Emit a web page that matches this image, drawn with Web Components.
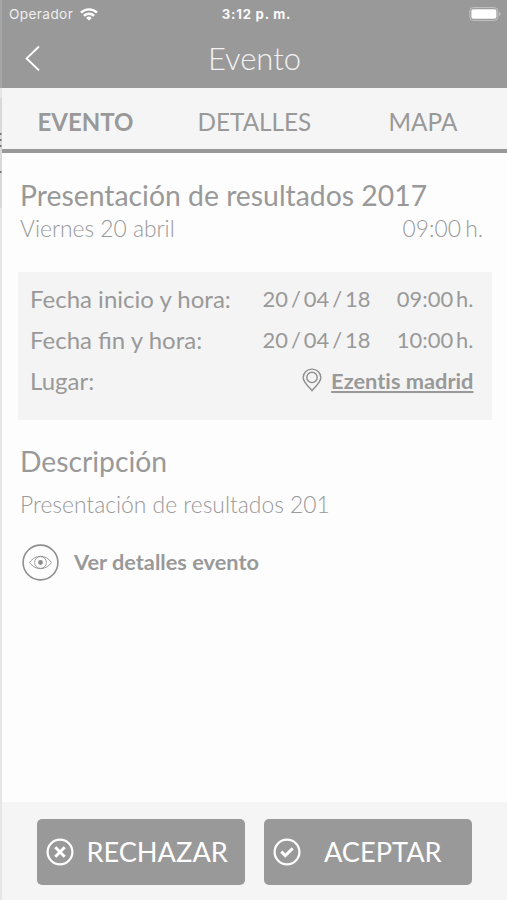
<!DOCTYPE html>
<html lang="es">
<head>
<meta charset="utf-8">
<title>Evento</title>
<style>
html,body{margin:0;height:100%}
body{background:#fdfdfd;font-family:Lato,"Open Sans",sans-serif;color:#999}
</style>
</head>
<body>
<event-app></event-app>
<script>
const define=(name,html)=>customElements.define(name,class extends HTMLElement{
  constructor(){super();this.attachShadow({mode:'open'}).innerHTML=html;}
});

define('status-bar',`<style>
:host{display:grid;grid-template-columns:1fr auto 1fr;align-items:center;height:28px;padding:0 6px 0 9px;color:#fafafa;font:400 13.6px/28px Inter,sans-serif;box-sizing:border-box}
.left{display:flex;align-items:center;gap:7px;letter-spacing:.4px;color:#efefef}
.time{font-weight:700;font-size:13.2px;letter-spacing:.75px;padding-left:3px}
.right{display:flex;justify-content:flex-end}
svg{display:block}
</style>
<div class="left"><span>Operador</span><svg width="18" height="13" viewBox="0 0 18 13" fill="none" stroke="#fff" stroke-width="2.4"><path d="M1 4.7a11.4 11.4 0 0 1 16 0"/><path d="M3.9 7.9a7.2 7.2 0 0 1 10.2 0"/><path d="M9 12.6 6.2 9.9a4 4 0 0 1 5.6 0z" fill="#fff" stroke="none"/></svg></div>
<div class="time">3:12 p. m.</div>
<div class="right"><svg width="32" height="14" viewBox="0 0 32 14"><rect x=".9" y=".6" width="28" height="12.8" rx="3.5" fill="none" stroke="#c4c4c4"/><rect x="2.4" y="2.2" width="25" height="9.6" rx="1.8" fill="#fff"/><path d="M30.2 5v4q1.5-.6 1.5-2t-1.5-2z" fill="#c4c4c4"/></svg></div>`);

define('title-bar',`<style>
:host{display:grid;grid-template-columns:60px 1fr 60px;align-items:center;height:60px;color:#f2f2f2}
svg{display:block;margin-left:24px}
h1{margin:0;text-align:center;font-weight:300;font-size:31px;line-height:60px;padding-left:2px}
</style>
<svg width="17" height="27" viewBox="0 0 17 27" fill="none" stroke="#fff" stroke-width="1.9"><path d="M15 1.5 2.6 13.4 15 25.4"/></svg>
<h1><slot></slot></h1>`);

define('tab-bar',`<style>
:host{display:grid;grid-template-columns:160px 191px auto;height:65px;box-sizing:border-box;background:#f5f5f5;border-bottom:4px solid #999;padding-left:37.5px}
</style><slot></slot>`);

define('tab-item',`<style>
:host{display:block;font-size:24.3px;line-height:67px}
:host([active]){font-weight:700;font-size:24px}
</style><slot></slot>`);

define('detail-row',`<style>
:host{display:grid;grid-template-columns:1fr auto auto;align-items:center;height:41px;line-height:41px;font-size:24px}
::slotted([slot=date]),::slotted([slot=time]){font-size:21.9px;word-spacing:-2.6px}
::slotted([slot=time]){width:103px;text-align:right}
</style><span><slot></slot></span><slot name="date"></slot><slot name="time"></slot><slot name="place"></slot>`);

define('place-link',`<style>
:host{display:flex;align-items:center;gap:9px;font-weight:700;font-size:21.8px;font-variant-ligatures:none}
svg{display:block;margin-bottom:1px}
span{text-decoration:underline;text-decoration-thickness:1.6px;text-underline-offset:2px;text-decoration-skip-ink:none}
</style><svg width="20" height="24" viewBox="0 0 20 24" fill="none" stroke="#8e8e8e" stroke-width="1.4"><path d="M10 22.7C7.5 18.9 1.2 14.7 1.2 9.4a8.8 8.3 0 0 1 17.6 0c0 5.3-6.3 9.5-8.8 13.3z"/><circle cx="10" cy="9.4" r="5.2"/></svg><span><slot></slot></span>`);

define('details-button',`<style>
:host{display:flex;align-items:center;gap:15px;font-weight:700;font-size:21.75px;line-height:33px}
svg{display:block}
</style><svg width="37" height="37" viewBox="0 0 37 37" fill="none" stroke="#8f8f8f"><circle cx="18.5" cy="18.5" r="17.4" stroke-width="1.6"/><path d="M7.5 18.5C13.5 10.3 23.5 10.3 29.5 18.5C23.5 26.7 13.5 26.7 7.5 18.5z" stroke-width=".9"/><circle cx="18.5" cy="18.5" r="5.9" stroke-width=".8"/><circle cx="18.5" cy="18.5" r="2.4" fill="#8f8f8f" stroke="none"/></svg><span><slot></slot></span>`);

const icons={reject:'M9.3 9.3l9.4 9.4M18.7 9.3l-9.4 9.4',accept:'M8.3 13.6l4 4 7.4-7.2'};
customElements.define('action-button',class extends HTMLElement{
  connectedCallback(){
    this.attachShadow({mode:'open'}).innerHTML=`<style>
:host{display:flex;align-items:center;box-sizing:border-box;width:208px;height:66px;padding-left:9px;border-radius:5px;background:#999;color:#fff;font-size:27.2px}
svg{display:block;flex:none}
.label{flex:1;padding-left:var(--label-gap);line-height:66px}
</style><svg width="28" height="28" viewBox="0 0 28 28" fill="none" stroke="#fff"><circle cx="14" cy="14" r="12.4" stroke-width="2.2"/><path d="${icons[this.getAttribute('kind')]}" stroke-width="2.9"/></svg><span class="label"><slot></slot></span>`;
  }
});

define('event-app',`<style>
:host{display:flex;flex-direction:column;height:900px;width:507px;position:relative;overflow:hidden;background:#fdfdfd}
header{background:#999;height:88px}
main{flex:1;padding:25px 15px 0 18px}
h2{margin:0 2px;font-weight:400;font-size:28.35px;line-height:34px}
.sub{display:flex;justify-content:space-between;margin:2px 9px 0 2px;font-weight:300;font-size:22.8px;line-height:28px}
.sub span:last-child{word-spacing:-2px}
.box{margin-top:30px;height:148px;box-sizing:border-box;background:#f4f4f4;padding:6px 18.5px 0 12px}
.desc{margin-top:24px;font-size:28.3px}
p{margin:12px 2px 0;font-weight:300;font-size:22.85px;line-height:28px}
details-button{margin:26px 0 0 4px}
footer{display:flex;gap:19px;height:98px;box-sizing:border-box;padding:17px 0 0 37.4px;background:#f5f5f5}
.edge{position:absolute;left:0;top:0}
</style>
<header><status-bar></status-bar><title-bar>Evento</title-bar></header>
<tab-bar><tab-item active>EVENTO</tab-item><tab-item>DETALLES</tab-item><tab-item>MAPA</tab-item></tab-bar>
<main>
<h2>Presentación de resultados 2017</h2>
<div class="sub"><span>Viernes 20 abril</span><span>09:00 h.</span></div>
<section class="box">
<detail-row>Fecha inicio y hora:<span slot="date">20 / 04 / 18</span><span slot="time">09:00 h.</span></detail-row>
<detail-row>Fecha fin y hora:<span slot="date">20 / 04 / 18</span><span slot="time">10:00 h.</span></detail-row>
<detail-row>Lugar:<place-link slot="place">Ezentis madrid</place-link></detail-row>
</section>
<h2 class="desc">Descripción</h2>
<p>Presentación de resultados 201</p>
<details-button>Ver detalles evento</details-button>
</main>
<footer><action-button kind="reject" style="--label-gap:12px">RECHAZAR</action-button><action-button kind="accept" style="--label-gap:22.5px">ACEPTAR</action-button></footer>
<svg class="edge" width="2" height="900"><rect width="2" height="88" fill="#a6a6a6"/><rect y="88" width="2" height="812" fill="#e6e6e6"/><rect y="98" width="2" height="110" fill="#d9d9d9"/><path d="M0 134h1.5M0 140h1.5M0 146h1.5M0 172h1.5" stroke="#777" stroke-width="2"/></svg>`);
</script>
</body>
</html>
